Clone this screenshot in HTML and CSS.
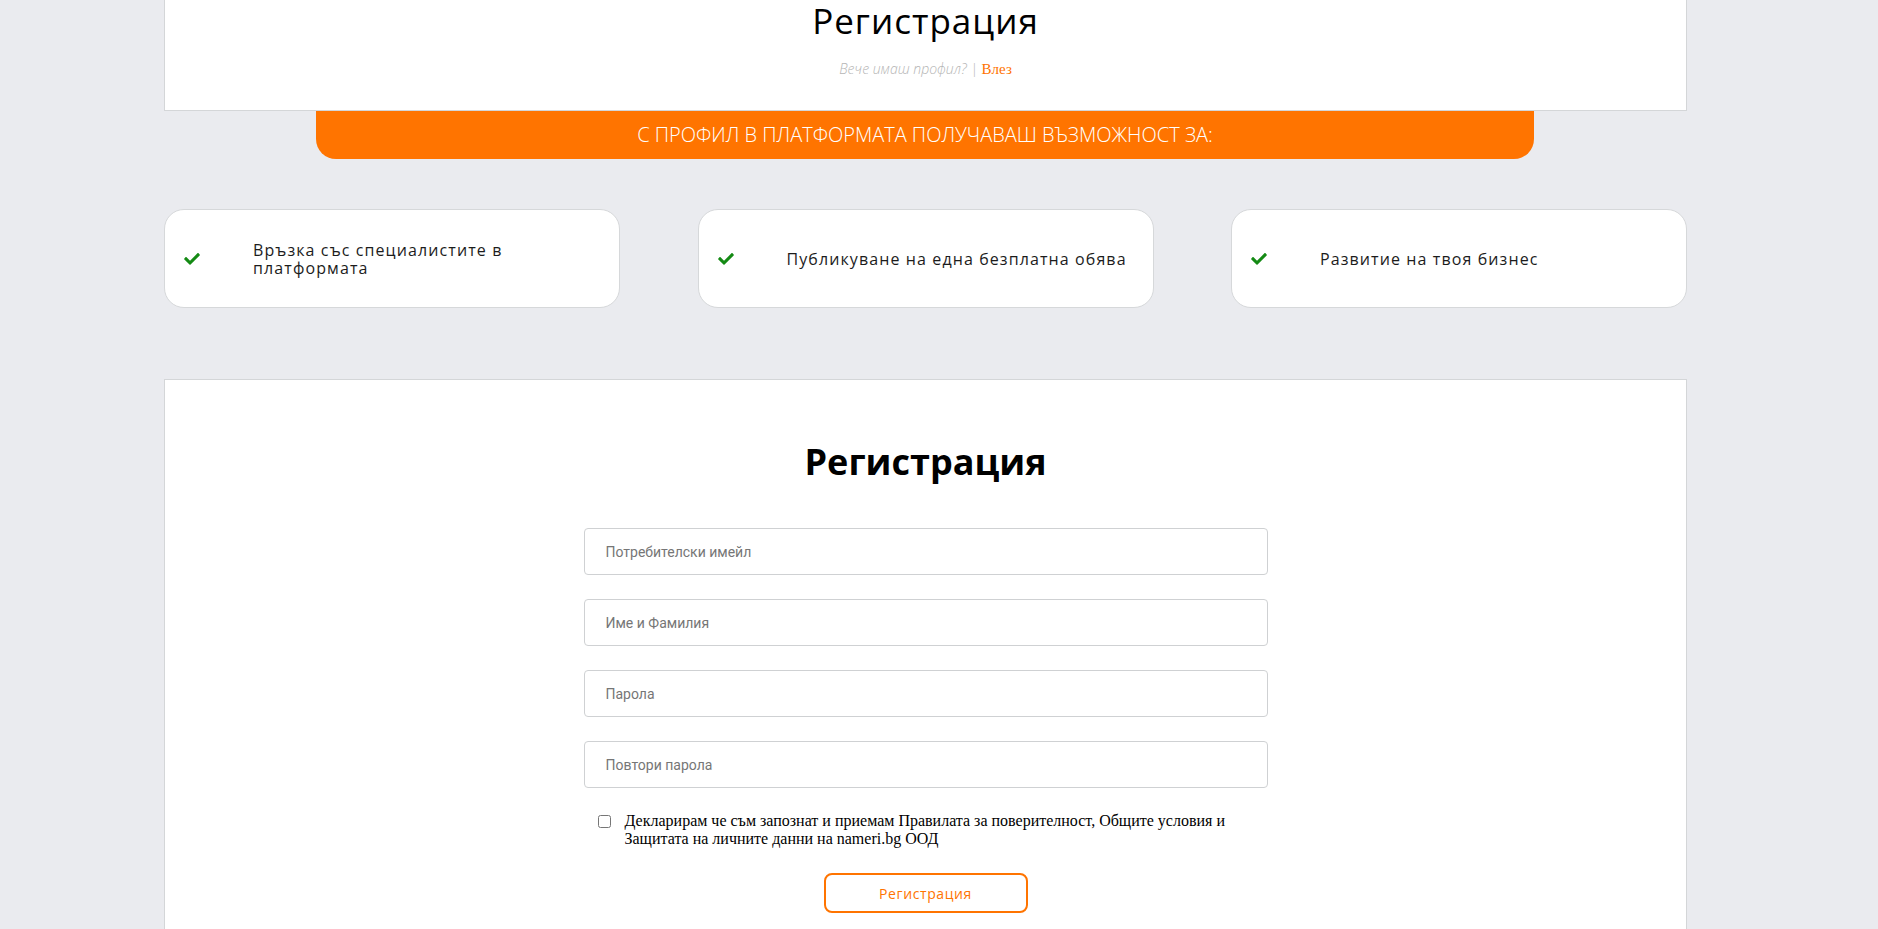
FILE: index.html
```html
<!DOCTYPE html>
<html lang="bg">
<head>
<meta charset="utf-8">
<title>Регистрация</title>
<link rel="stylesheet" href="styles.css">
</head>
<body>
<div class="page">
  <header class="top-card">
    <h1 class="top-title">Регистрация</h1>
    <p class="top-sub"><span class="muted">Вече имаш профил? | </span><a class="login-link" href="#">Влез</a></p>
  </header>
  <div class="banner">С ПРОФИЛ В ПЛАТФОРМАТА ПОЛУЧАВАШ ВЪЗМОЖНОСТ ЗА:</div>

  <div class="features">
    <div class="feature">
      <svg class="check" viewBox="0 62 512 390"><path d="M173.9 439.4l-166.4-166.4c-10-10-10-26.2 0-36.2l36.2-36.2c10-10 26.2-10 36.2 0L192 312.7 432.1 72.6c10-10 26.2-10 36.2 0l36.2 36.2c10 10 10 26.2 0 36.2l-294.4 294.4c-10 10-26.2 10-36.2 0z"/></svg>
      <span class="feature-text">Връзка със специалистите в платформата</span>
    </div>
    <div class="feature">
      <svg class="check" viewBox="0 62 512 390"><path d="M173.9 439.4l-166.4-166.4c-10-10-10-26.2 0-36.2l36.2-36.2c10-10 26.2-10 36.2 0L192 312.7 432.1 72.6c10-10 26.2-10 36.2 0l36.2 36.2c10 10 10 26.2 0 36.2l-294.4 294.4c-10 10-26.2 10-36.2 0z"/></svg>
      <span class="feature-text">Публикуване на една безплатна обява</span>
    </div>
    <div class="feature">
      <svg class="check" viewBox="0 62 512 390"><path d="M173.9 439.4l-166.4-166.4c-10-10-10-26.2 0-36.2l36.2-36.2c10-10 26.2-10 36.2 0L192 312.7 432.1 72.6c10-10 26.2-10 36.2 0l36.2 36.2c10 10 10 26.2 0 36.2l-294.4 294.4c-10 10-26.2 10-36.2 0z"/></svg>
      <span class="feature-text">Развитие на твоя бизнес</span>
    </div>
  </div>

  <section class="form-card">
    <h2 class="form-title">Регистрация</h2>
    <form class="form">
      <input class="field" type="email" placeholder="Потребителски имейл">
      <input class="field" type="text" placeholder="Име и Фамилия">
      <input class="field" type="password" placeholder="Парола">
      <input class="field" type="password" placeholder="Повтори парола">
      <label class="agree">
        <input class="agree-box" type="checkbox">
        <span class="agree-text">Декларирам че съм запознат и приемам Правилата за поверителност, Общите условия и Защитата на личните данни на nameri.bg ООД</span>
      </label>
      <div class="actions">
        <button class="submit" type="button">Регистрация</button>
      </div>
    </form>
  </section>
</div>
</body>
</html>
```

FILE: styles.css
```css
* { box-sizing: border-box; }

html, body {
  margin: 0;
  padding: 0;
  background: #eaebef;
  height: 929px;
  overflow: hidden;
}

.page {
  width: 1523px;
  margin-left: 164px;
  font-family: "Open Sans", "Noto Sans", sans-serif;
}

.top-card {
  background: #fff;
  border: 1px solid #d4d6d8;
  border-top: none;
  height: 111px;
  text-align: center;
}

.top-title {
  margin: 0;
  font-size: 35px;
  font-weight: 400;
  line-height: 42px;
  letter-spacing: 1px;
  color: #000;
}

.top-sub {
  margin: 17px 0 0;
  line-height: 20px;
  font-size: 14px;
}

.muted {
  font-style: italic;
  font-weight: 300;
  color: #b5b5b5;
}

.login-link {
  font-family: "Liberation Serif", serif;
  font-size: 15px;
  color: #ff7300;
  text-decoration: none;
}

.banner {
  width: 1218px;
  margin-left: 152px;
  height: 48px;
  background: #ff7400;
  border-radius: 0 0 20px 20px;
  color: #fff;
  font-size: 20px;
  font-weight: 300;
  line-height: 48px;
  text-align: center;
}

.features {
  display: flex;
  justify-content: space-between;
  margin-top: 50px;
}

.feature {
  width: 456px;
  height: 99px;
  background: #fff;
  border: 1px solid #d6d8da;
  border-radius: 20px;
  display: flex;
  align-items: center;
  padding: 0 20px 0 19px;
}

.check {
  width: 16px;
  height: 12px;
  fill: #148a14;
  flex: none;
  margin-right: 53px;
}

.feature-text {
  font-size: 16px;
  line-height: 18px;
  letter-spacing: 1.1px;
  color: #1c1c1c;
}

.form-card {
  margin-top: 71px;
  background: #fff;
  border: 1px solid #d4d6d8;
  height: 600px;
  padding-top: 58px;
}

.form-title {
  margin: 0;
  text-align: center;
  font-size: 36px;
  font-weight: 700;
  line-height: 48px;
  color: #000;
}

.form {
  width: 684px;
  margin: 42px auto 0;
}

.field {
  display: block;
  width: 100%;
  height: 47px;
  margin-bottom: 24px;
  border: 1px solid #cfd1d3;
  border-radius: 4px;
  padding: 0 21px;
  font-family: "Roboto", sans-serif;
  font-size: 14px;
  color: #333;
  background: #fff;
}

.field::placeholder { color: #767676; }

.agree {
  display: flex;
  align-items: flex-start;
  margin-top: 4px;
  padding-left: 14px;
  padding-right: 20px;
}

.agree-box {
  width: 13px;
  height: 13px;
  margin: 3px 14px 0 0;
  flex: none;
}

.agree-text {
  font-family: "Liberation Serif", serif;
  font-size: 16px;
  line-height: 18px;
  color: #000;
}

.actions {
  display: flex;
  justify-content: center;
  margin-top: 25px;
}

.submit {
  width: 204px;
  height: 40px;
  background: #fff;
  border: 2.5px solid #ff7400;
  border-radius: 8px;
  color: #ff7400;
  font-family: "Open Sans", sans-serif;
  font-size: 14px;
  letter-spacing: 0.6px;
  cursor: pointer;
}
```
